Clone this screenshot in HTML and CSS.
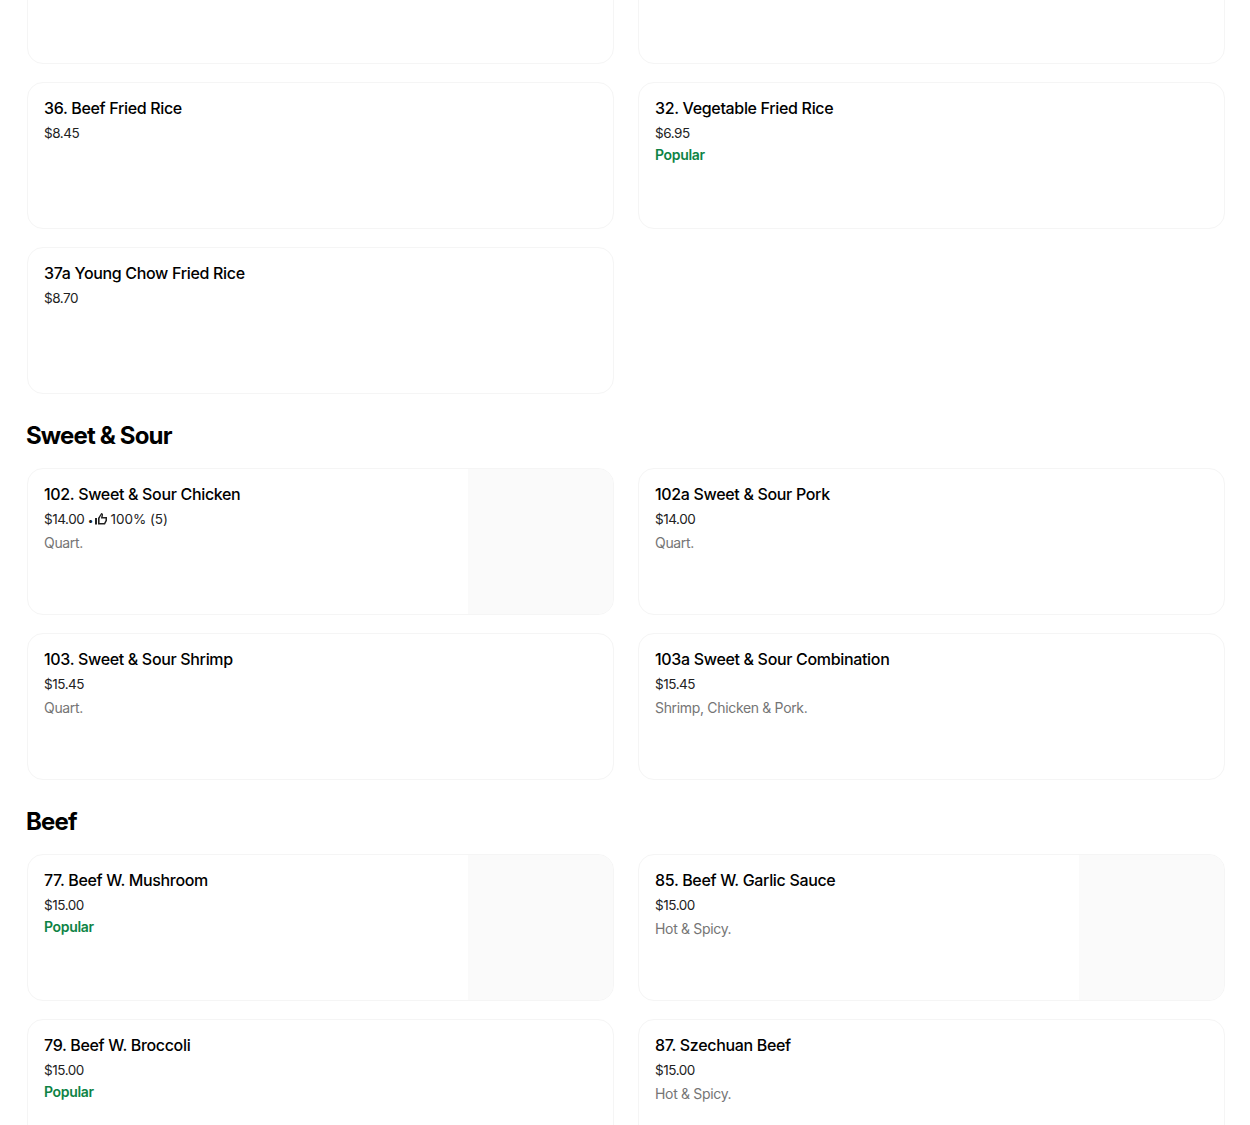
FILE: index.html
```html
<!DOCTYPE html>
<html lang="en">
<head>
<meta charset="utf-8">
<title>Menu</title>
<link rel="stylesheet" href="styles.css">
</head>
<body>
<main class="menu">
  <section class="section">
    <div class="grid">
      <article class="card"></article>
      <article class="card"></article>
      <article class="card"><div class="info"><h3 class="title">36. Beef Fried Rice</h3><p class="price">$8.45</p></div></article>
      <article class="card"><div class="info"><h3 class="title">32. Vegetable Fried Rice</h3><p class="price">$6.95</p><p class="popular">Popular</p></div></article>
      <article class="card"><div class="info"><h3 class="title">37a Young Chow Fried Rice</h3><p class="price">$8.70</p></div></article>
    </div>
  </section>
  <section class="section">
    <h2 class="heading">Sweet &amp; Sour</h2>
    <div class="grid">
      <article class="card"><div class="info"><h3 class="title">102. Sweet &amp; Sour Chicken</h3><p class="price">$14.00 <span class="dot">•</span> <svg class="thumb" viewBox="0 0 12 12" width="12" height="12" aria-hidden="true"><path d="M0 5H2V11.5H0Z M3 11.5V5L6.3 0C7.6 0 8.2 1 8 2.2L7.7 4H12V7.8L10 11.5Z M4.6 5.6V10H9.1L10.5 7.3V5.5H5.9L6.6 2C6.7 1.7 6.6 1.6 6.5 1.6Z" fill-rule="evenodd"/></svg> <span class="rating">100% (5)</span></p><p class="desc">Quart.</p></div><div class="photo"></div></article>
      <article class="card"><div class="info"><h3 class="title">102a Sweet &amp; Sour Pork</h3><p class="price">$14.00</p><p class="desc">Quart.</p></div></article>
      <article class="card"><div class="info"><h3 class="title">103. Sweet &amp; Sour Shrimp</h3><p class="price">$15.45</p><p class="desc">Quart.</p></div></article>
      <article class="card"><div class="info"><h3 class="title">103a Sweet &amp; Sour Combination</h3><p class="price">$15.45</p><p class="desc">Shrimp, Chicken &amp; Pork.</p></div></article>
    </div>
  </section>
  <section class="section">
    <h2 class="heading">Beef</h2>
    <div class="grid">
      <article class="card"><div class="info"><h3 class="title">77. Beef W. Mushroom</h3><p class="price">$15.00</p><p class="popular">Popular</p></div><div class="photo"></div></article>
      <article class="card"><div class="info"><h3 class="title">85. Beef W. Garlic Sauce</h3><p class="price">$15.00</p><p class="desc">Hot &amp; Spicy.</p></div><div class="photo"></div></article>
      <article class="card"><div class="info"><h3 class="title">79. Beef W. Broccoli</h3><p class="price">$15.00</p><p class="popular">Popular</p></div></article>
      <article class="card"><div class="info"><h3 class="title">87. Szechuan Beef</h3><p class="price">$15.00</p><p class="desc">Hot &amp; Spicy.</p></div></article>
    </div>
  </section>
</main>
</body>
</html>
```
FILE: styles.css
```css
html, body {
  margin: 0;
  padding: 0;
  height: 1125px;
  overflow: hidden;
  background: #fff;
}
body {
  font-family: "Inter", "Liberation Sans", sans-serif;
  color: #000;
}
.menu {
  margin-top: -83px;
  padding: 0 25px 0 27px;
  display: flex;
  flex-direction: column;
  gap: 22px;
}
.heading {
  margin: 0 0 16px -1px;
  padding-top: 2px;
  height: 34px;
  font-size: 24px;
  line-height: 36px;
  font-weight: 700;
  letter-spacing: -0.85px;
}
.grid {
  display: grid;
  grid-template-columns: 587px 587px;
  column-gap: 24px;
  row-gap: 18px;
}
.card {
  height: 147px;
  box-sizing: border-box;
  border: 1px solid #f5f5f5;
  border-radius: 16px;
  display: flex;
  overflow: hidden;
}
.info {
  flex: 1;
  padding: 15px 16px 0;
}
.title {
  margin: 0;
  font-size: 16px;
  line-height: 20px;
  font-weight: 500;
  letter-spacing: -0.33px;
}
.price {
  margin: 5px 0 0;
  height: 20px;
  font-size: 13.5px;
  line-height: 20px;
  color: #222;
  letter-spacing: -0.45px;
}
.dot {
  font-size: 10px;
  line-height: 1;
}
.thumb {
  vertical-align: -1px;
  fill: #222;
  margin: 0 0 0 -1px;
}
.rating {
  letter-spacing: -0.05px;
}
.desc {
  margin: 4px 0 0;
  font-size: 14px;
  line-height: 20px;
  color: #757575;
  letter-spacing: -0.33px;
}
.popular {
  margin: 2px 0 0;
  font-size: 14px;
  line-height: 20px;
  font-weight: 600;
  color: #0e8345;
  letter-spacing: -0.33px;
}
.photo {
  width: 145px;
  flex: none;
  background: #fafafa;
}
```
